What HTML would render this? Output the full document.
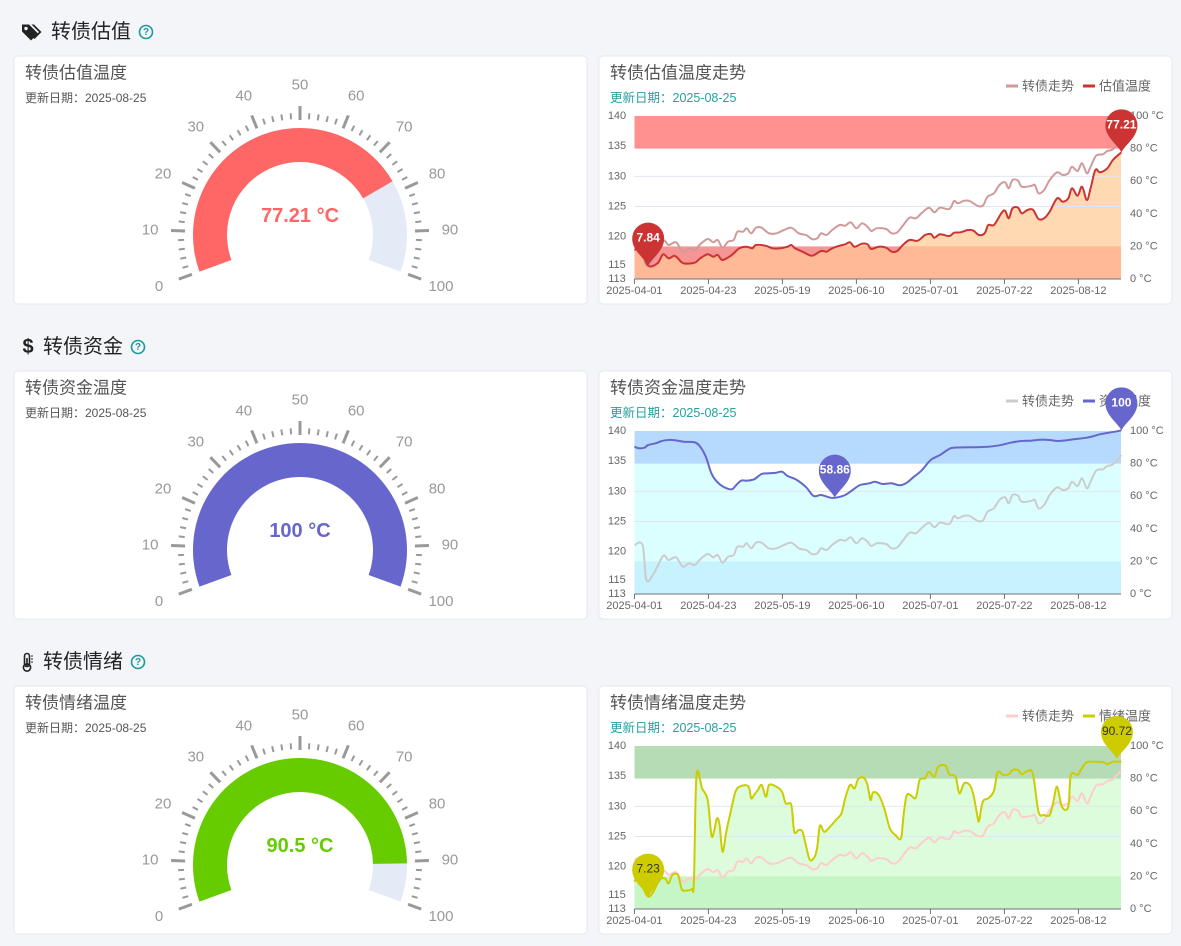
<!DOCTYPE html>
<html><head><meta charset="utf-8"><style>
body{margin:0;background:#f3f5f9;width:1181px;height:946px;overflow:hidden;font-family:"Liberation Sans","Noto Sans CJK SC",sans-serif;}
svg{position:absolute;left:0;top:0}
</style></head><body>
<svg id="s" width="1181" height="946" xmlns="http://www.w3.org/2000/svg"></svg>
<script>
var S=document.getElementById('s'),h='';
function T(x,y,t,sz,c,a,w){h+='<text x="'+x+'" y="'+y+'" font-size="'+sz+'" fill="'+c+'" text-anchor="'+(a||'start')+'" dominant-baseline="central"'+(w?' font-weight="bold"':'')+'>'+t+'</text>';}
function smooth(p){var d='M'+p[0][0].toFixed(1)+','+p[0][1].toFixed(1);for(var i=0;i<p.length-1;i++){var p0=p[i-1]||p[i],p1=p[i],p2=p[i+1],p3=p[i+2]||p2;var c1=[p1[0]+(p2[0]-p0[0])/6,p1[1]+(p2[1]-p0[1])/6],c2=[p2[0]-(p3[0]-p1[0])/6,p2[1]-(p3[1]-p1[1])/6];d+=' C'+c1[0].toFixed(1)+','+c1[1].toFixed(1)+' '+c2[0].toFixed(1)+','+c2[1].toFixed(1)+' '+p2[0].toFixed(1)+','+p2[1].toFixed(1);}return d;}
var bond=[[98,525],[120,525],[130,630],[150,610],[175,558],[190,570],[210,562],[228,590],[245,580],[260,585],[275,568],[295,552],[310,562],[322,555],[335,578],[350,560],[365,555],[375,530],[390,530],[400,520],[412,535],[425,518],[440,518],[460,535],[480,535],[500,525],[520,518],[540,535],[560,540],[575,552],[590,550],[600,535],[615,540],[630,525],[650,510],[665,512],[680,502],[695,520],[710,505],[725,515],[735,528],[750,520],[775,522],[790,535],[805,532],[820,512],[838,488],[855,490],[870,475],[890,458],[905,472],[920,458],[945,462],[958,438],[968,445],[985,437],[1000,438],[1020,452],[1035,452],[1048,425],[1065,415],[1080,390],[1095,382],[1105,400],[1115,375],[1130,377],[1140,395],[1165,393],[1175,390],[1185,415],[1200,405],[1215,375],[1235,352],[1250,360],[1265,355],[1275,335],[1290,348],[1302,325],[1315,355],[1325,335],[1340,302],[1358,298],[1370,288],[1385,283],[1408,255]];
var bond1=bond.slice();bond1[0]=[98,585];bond1[1]=[115,583];
var t1=[[98,585],[115,583],[135,632],[160,625],[175,598],[190,610],[205,602],[215,610],[230,625],[260,623],[275,610],[295,598],[310,605],[322,600],[335,615],[360,600],[380,580],[400,575],[415,580],[425,570],[450,572],[470,580],[490,580],[510,575],[520,570],[530,580],[550,590],[575,602],[600,588],[615,590],[630,580],[650,572],[665,568],[678,562],[690,575],[710,566],[725,568],[735,582],[755,575],[775,578],[790,590],[805,588],[820,570],[838,555],[860,557],[880,540],[895,537],[905,548],[920,538],[945,543],[958,533],[975,532],[995,525],[1010,527],[1025,540],[1040,535],[1050,510],[1065,510],[1085,475],[1095,467],[1105,490],[1115,460],[1130,458],[1140,475],[1155,465],[1170,464],[1185,492],[1200,490],[1215,470],[1235,430],[1250,440],[1265,430],[1275,400],[1290,422],[1302,395],[1315,435],[1325,400],[1338,345],[1350,352],[1370,340],[1385,315],[1408,292]];
var t2=[[98,230],[110,235],[125,233],[135,225],[155,220],[175,212],[200,210],[230,215],[260,217],[275,230],[290,260],[305,310],[320,335],[340,352],[360,358],[372,345],[385,332],[400,332],[420,328],[440,312],[460,310],[480,308],[495,305],[510,318],[535,330],[560,352],[580,378],[600,375],[625,383],[640,383],[665,375],[685,360],[705,345],[730,340],[745,335],[765,342],[790,340],[810,346],[828,340],[850,320],[870,302],[895,270],[920,255],[940,240],[955,233],[1000,232],[1050,230],[1080,226],[1110,218],[1140,213],[1165,212],[1190,209],[1215,210],[1240,213],[1280,208],[1320,202],[1350,193],[1380,187],[1408,181]];
var t3=[[98,590],[110,565],[120,605],[135,635],[150,618],[165,585],[180,580],[190,595],[200,570],[215,570],[225,612],[235,617],[252,612],[258,590],[265,272],[280,310],[295,345],[305,450],[312,440],[320,400],[327,420],[335,500],[345,440],[355,390],[370,320],[385,303],[405,305],[412,340],[420,330],[430,315],[440,300],[452,335],[460,300],[480,305],[495,320],[505,355],[520,360],[528,440],[540,435],[550,440],[560,485],[570,525],[583,515],[590,485],[597,422],[608,440],[620,430],[640,405],[655,385],[665,340],[678,300],[690,310],[700,282],[715,278],[725,300],[733,345],[740,322],[755,330],[770,370],[785,430],[800,450],[815,460],[822,390],[830,332],[840,330],[855,338],[865,285],[880,280],[890,260],[905,275],[915,245],[935,242],[945,268],[962,275],[972,325],[985,295],[1000,300],[1010,330],[1020,390],[1025,408],[1035,350],[1050,340],[1065,318],[1075,262],[1090,270],[1105,268],[1115,255],[1130,255],[1140,268],[1155,258],[1170,268],[1185,380],[1200,390],[1215,390],[1225,350],[1235,305],[1248,365],[1265,365],[1272,270],[1290,270],[1300,252],[1315,232],[1340,230],[1360,232],[1370,238],[1385,230],[1408,230]];
var secs=[
{name:'转债估值',g:'转债估值温度',c:'转债估值温度走势',lg:'估值温度',val:77.21,vt:'77.21 °C',col:'#ff6666',tc:'#ff6666',bc:'#d19a9a',t:t1,b:bond1,top:'#ff9191',area:'#ffd9b2',low:'rgba(255,110,110,0.32)',mk:[[135,632,'7.84'],[1408,292,'77.21']],mc:'#cc3333',mt:'#fff',lc:'#cc3333'},
{name:'转债资金',g:'转债资金温度',c:'转债资金温度走势',lg:'资金温度',val:100,vt:'100 °C',col:'#6666cc',tc:'#6666cc',bc:'#cccccc',t:t2,b:bond,top:'#b5dafd',area:'#dbffff',low:'#c6f3fe',mk:[[637,383,'58.86'],[1408,181,'100']],mc:'#6666cc',mt:'#fff',lc:'#6666cc'},
{name:'转债情绪',g:'转债情绪温度',c:'转债情绪温度走势',lg:'情绪温度',val:90.5,vt:'90.5 °C',col:'#66cc00',tc:'#66cc00',bc:'#ffcccc',t:t3,b:bond,top:'#b6dcb6',area:'#dcfcdc',low:'#c6f6c6',mk:[[135,635,'7.23'],[1396,222,'90.72']],mc:'#cccc00',mt:'#333',lc:'#cccc00'}];
var dates=['2025-04-01','2025-04-23','2025-05-19','2025-06-10','2025-07-01','2025-07-22','2025-08-12'];
function pt(a,o){return [598+a[0]/2.69,o+a[1]/3];}
secs.forEach(function(s,k){
 var dy=315*k;
 var hy=32+dy;
 if(k==0){h+='<g transform="translate(22,'+(hy-9)+')" fill="#222"><path d="M0,1.5 L0,8.5 L9,17.5 L16,10.5 L7,1.5Z"/><circle cx="4" cy="5.5" r="1.7" fill="#f3f5f9"/><path d="M9.5,1.5 L12,1.5 L19.5,9 L12.5,16 L11.3,14.8 L17,9Z"/></g>';}
 else if(k==1){T(28,hy,'$',20,'#222','middle',1);}
 else {h+='<g transform="translate(23,'+(hy-9)+')"><rect x="1.5" y="0.5" width="5" height="13" rx="2.5" fill="none" stroke="#222" stroke-width="1.6"/><circle cx="4" cy="14.5" r="3.6" fill="none" stroke="#222" stroke-width="1.6"/><rect x="3.2" y="5" width="1.6" height="9" fill="#222"/><path d="M8,3h2M8,6h2M8,9h2" stroke="#222" stroke-width="1"/></g>';}
 T(k==0?51:43,hy,s.name,20,'#222');
 var qx=k==0?146:138;
 h+='<circle cx="'+qx+'" cy="'+hy+'" r="6.5" fill="none" stroke="#1a9a9a" stroke-width="1.6"/>';T(qx,hy+0.5,'?',10,'#1a9a9a','middle',1);
 var cy0=56+dy;
 h+='<rect x="14" y="'+cy0+'" width="573" height="248" rx="4" fill="#fff" stroke="#e6e8ec"/>';
 h+='<rect x="599" y="'+cy0+'" width="573" height="248" rx="4" fill="#fff" stroke="#e6e8ec"/>';
 T(25,cy0+17,s.g,17,'#555');T(25,cy0+42,'更新日期：2025-08-25',12,'#555');
 T(610,cy0+17,s.c,17,'#555');T(610,cy0+42,'更新日期：2025-08-25',12.5,'#26a0a0');
 var gx=300,gy=235+dy;
 function P(r,a){a=a*Math.PI/180;return [gx+r*Math.cos(a),gy-r*Math.sin(a)];}
 function arc(r0,r1,a0,a1,c){var p0=P(r1,a0),p1=P(r1,a1),p2=P(r0,a1),p3=P(r0,a0),l=(a0-a1)>180?1:0;h+='<path d="M'+p0+' A'+r1+','+r1+' 0 '+l+' 1 '+p1+' L'+p2+' A'+r0+','+r0+' 0 '+l+' 0 '+p3+'Z" fill="'+c+'"/>';}
 var ve=200-2.2*s.val;
 arc(73,107,200,-20,'#e4ebf7');arc(73,107,200,ve,s.col);
 for(var i=0;i<=50;i++){var a=200-4.4*i,maj=i%5==0,p0=P(maj?115:116,a),p1=P(maj?129:122,a);h+='<line x1="'+p0[0]+'" y1="'+p0[1]+'" x2="'+p1[0]+'" y2="'+p1[1]+'" stroke="#999" stroke-width="'+(maj?3:2)+'"/>';if(i%5==0){var l=P(150,a);T(l[0],l[1],i*2,15,'#999','middle');}}
 T(gx,gy-19,s.vt,20,s.tc,'middle',1);
 var o=55+dy, X0=634.4,X1=1121,Yt=116+dy,Yb=279+dy;
 function Yv(v){return Yb-(v-113)*163/27;}
 function Yc(c){return Yb-c*1.63;}
 h+='<defs><clipPath id="c'+k+'"><rect x="'+X0+'" y="'+Yt+'" width="'+(X1-X0)+'" height="'+(Yb-Yt)+'"/></clipPath></defs>';
 var tp=s.t.map(function(a){return pt(a,o)}),bp=s.b.map(function(a){return pt(a,o)});
 var ld=smooth(tp);
 h+='<g clip-path="url(#c'+k+')">';
 h+='<path d="'+ld+' L'+X1+','+Yb+' L'+X0+','+Yb+'Z" fill="'+s.area+'"/>';
 h+='<rect x="'+X0+'" y="'+Yc(100)+'" width="'+(X1-X0)+'" height="'+(Yc(80)-Yc(100))+'" fill="'+s.top+'"/>';
 if(k==0){h+='<rect x="'+X0+'" y="'+Yc(20)+'" width="'+(X1-X0)+'" height="'+(Yb-Yc(20))+'" fill="#f59595"/>';h+='<path d="'+ld+' L'+X1+','+Yb+' L'+X0+','+Yb+'Z" fill="#ffb996" clip-path="url(#lw'+k+')"/>';h+='<defs><clipPath id="lw'+k+'"><rect x="'+X0+'" y="'+Yc(20)+'" width="500" height="40"/></clipPath></defs>';}
 else h+='<rect x="'+X0+'" y="'+Yc(20)+'" width="'+(X1-X0)+'" height="'+(Yb-Yc(20))+'" fill="'+s.low+'"/>';
 if(k==1){h+='<path d="'+ld+' L'+X1+','+Yt+' L'+X0+','+Yt+'Z" fill="#b5dafd" clip-path="url(#tb1)"/><defs><clipPath id="tb1"><rect x="'+X0+'" y="'+Yt+'" width="500" height="'+(Yc(80)-Yt)+'"/></clipPath></defs>';}
 h+='</g>';
 [130,125].forEach(function(v){h+='<line x1="'+X0+'" x2="'+X1+'" y1="'+Yv(v)+'" y2="'+Yv(v)+'" stroke="#e0e6f1"/>';});
 h+='<path d="'+smooth(bp)+'" fill="none" stroke="'+s.bc+'" stroke-width="2"/>';
 h+='<path d="'+ld+'" fill="none" stroke="'+s.lc+'" stroke-width="2"/>';
 h+='<line x1="'+X0+'" x2="'+X1+'" y1="'+Yb+'" y2="'+Yb+'" stroke="#6e7079"/>';
 [140,135,130,125,120,115,113].forEach(function(v){T(617,Yv(v)+(v==115?-2:0),v,11,'#666','middle');});
 [0,20,40,60,80,100].forEach(function(v){T(1130,Yc(v),v+' °C',11,'#666');});
 dates.forEach(function(d,i){var x=X0+i*74;h+='<line x1="'+x+'" x2="'+x+'" y1="'+Yb+'" y2="'+(Yb+5)+'" stroke="#6e7079"/>';T(x,Yb+12,d,11,'#666','middle');});
 var ly=86+dy;
 h+='<line x1="1006" x2="1018" y1="'+ly+'" y2="'+ly+'" stroke="'+s.bc+'" stroke-width="3"/>';T(1022,ly,'转债走势',13,'#666');
 h+='<line x1="1083" x2="1095" y1="'+ly+'" y2="'+ly+'" stroke="'+s.lc+'" stroke-width="3"/>';T(1099,ly,s.lg,13,'#666');
 s.mk.forEach(function(m){var p=pt(m,o),x=p[0],y=p[1];h+='<path d="M'+x+','+y+' C'+(x-4)+','+(y-8)+' '+(x-16)+','+(y-15)+' '+(x-16)+','+(y-27)+' A16,16 0 1 1 '+(x+16)+','+(y-27)+' C'+(x+16)+','+(y-15)+' '+(x+4)+','+(y-8)+' '+x+','+y+'Z" fill="'+s.mc+'"/>';T(x,y-28,m[2],12,s.mt,'middle',k!=2);});
});
S.innerHTML=h;
</script>
</body></html>
